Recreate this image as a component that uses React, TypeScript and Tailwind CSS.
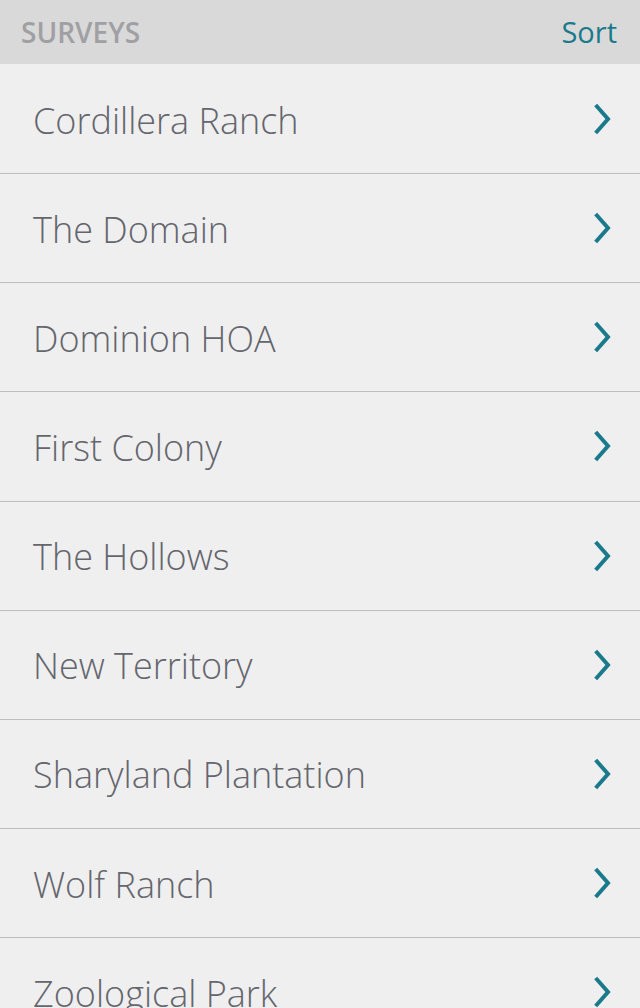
import React from 'react';

// Survey list screen
const surveys = [
  'Cordillera Ranch',
  'The Domain',
  'Dominion HOA',
  'First Colony',
  'The Hollows',
  'New Territory',
  'Sharyland Plantation',
  'Wolf Ranch',
  'Zoological Park',
];

function Chevron() {
  return (
    <svg width="22" height="32" viewBox="0 0 22 32" fill="none" className="shrink-0">
      <path d="M5 3.5 L16 16 L5 28.5" stroke="#1a7a8c" strokeWidth="4" strokeLinecap="square" strokeLinejoin="miter" />
    </svg>
  );
}

export default function App() {
  return (
    <div className="h-[1008px] overflow-hidden bg-[#efefef] font-['Open_Sans',sans-serif]">
      {/* Header */}
      <header className="h-16 bg-[#d9d9d9] flex items-center justify-between pl-[21px] pr-[24px]">
        <span className="text-[28px] font-semibold text-[#a0a0a4]">SURVEYS</span>
        <span className="text-[29px] text-[#1a7a8c] ml-auto mr-[-1px]">Sort</span>
      </header>

      {/* List */}
      <ul className="pt-px">
        {surveys.map((name) => (
          <li
            key={name}
            className="h-[109.15px] border-b border-[#bdbdbd] flex items-center justify-between pl-[33px] pr-[26px]"
          >
            <span className="text-[36px] font-light text-[#64656d] pt-[3px]">{name}</span>
            <Chevron />
          </li>
        ))}
      </ul>
    </div>
  );
}
